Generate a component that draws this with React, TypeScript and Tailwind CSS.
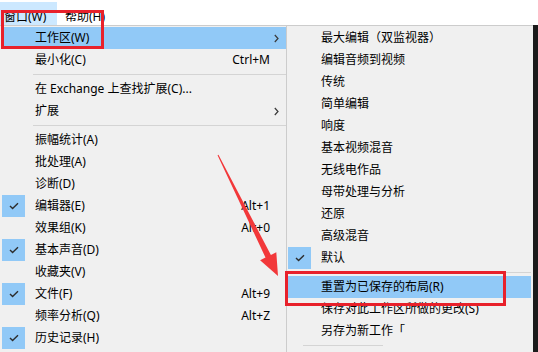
type Item =
  | { sep: true }
  | { sep?: false; label: string; shortcut?: string; checked?: boolean; sub?: boolean; active?: boolean };

const windowMenu: Item[] = [
  { label: '工作区(W)', sub: true, active: true },
  { label: '最小化(C)', shortcut: 'Ctrl+M' },
  { sep: true },
  { label: '在 Exchange 上查找扩展(C)...' },
  { label: '扩展', sub: true },
  { sep: true },
  { label: '振幅统计(A)' },
  { label: '批处理(A)' },
  { label: '诊断(D)' },
  { label: '编辑器(E)', shortcut: 'Alt+1', checked: true },
  { label: '效果组(K)', shortcut: 'Alt+0' },
  { label: '基本声音(D)', checked: true },
  { label: '收藏夹(V)' },
  { label: '文件(F)', shortcut: 'Alt+9', checked: true },
  { label: '频率分析(Q)', shortcut: 'Alt+Z' },
  { label: '历史记录(H)', checked: true },
];

const workspaceMenu: Item[] = [
  { label: '最大编辑（双监视器）' },
  { label: '编辑音频到视频' },
  { label: '传统' },
  { label: '简单编辑' },
  { label: '响度' },
  { label: '基本视频混音' },
  { label: '无线电作品' },
  { label: '母带处理与分析' },
  { label: '还原' },
  { label: '高级混音' },
  { label: '默认', checked: true },
  { sep: true },
  { label: '重置为已保存的布局(R)', active: true },
  { label: '保存对此工作区所做的更改(S)' },
  { label: '另存为新工作「' },
];

function Check() {
  return (
    <svg width="10" height="8" viewBox="0 0 10 8" fill="none">
      <polyline points="1,4 3.6,6.6 9,1.2" stroke="#2d2d2d" strokeWidth="1.4" />
    </svg>
  );
}

function Chevron() {
  return (
    <svg width="5" height="9" viewBox="0 0 5 9" fill="none">
      <polyline points="0.8,1 4,4.5 0.8,8" stroke="#3a3a3a" strokeWidth="1.2" />
    </svg>
  );
}

function MenuRows({ items, sepClass }: { items: Item[]; sepClass: string }) {
  return (
    <>
      {items.map((item, i) => {
        if (item.sep) {
          return (
            <div key={i} className="h-[7px] flex items-center">
              <div className={`h-px bg-[#d4d4d4] ${sepClass}`} />
            </div>
          );
        }
        return (
          <div
            key={i}
            className={`h-[22px] flex items-center ${item.active ? 'bg-[#91c9f7]' : ''}`}
          >
            <div
              className={`w-[23px] h-[22px] flex items-center justify-center ${
                item.checked ? 'bg-[#91c9f7]' : ''
              }`}
            >
              {item.checked && <Check />}
            </div>
            <span className="ml-[10px] flex-1 whitespace-nowrap">{item.label}</span>
            {item.shortcut && <span className="whitespace-nowrap">{item.shortcut}</span>}
            <div className="w-[16px] flex items-center pl-[4px]">{item.sub && <Chevron />}</div>
          </div>
        );
      })}
    </>
  );
}

export default function App() {
  return (
    <div className="relative w-[538px] h-[352px] overflow-hidden bg-white text-[12px] text-black font-['Noto_Sans','Noto_Sans_CJK_SC',sans-serif]">
      {/* menu bar */}
      <div className="h-[25px] flex items-end">
        <div className="h-[23px] w-[57px] bg-[#cce8ff] flex items-center pl-[4px] pt-[6px]">窗口(W)</div>
        <div className="h-[23px] flex items-center pl-[8px] pt-[6px]">帮助(H)</div>
      </div>

      <div className="flex">
        {/* window menu */}
        <div className="w-[286px] h-[327px] bg-[#f0f0f0] border-t border-[#cccccc] pt-px">
          <div className="ml-[2px]">
            <MenuRows items={windowMenu} sepClass="ml-[31px] w-[253px]" />
          </div>
        </div>

        {/* workspace submenu */}
        <div className="w-[247px] h-[327px] bg-[#f0f0f0] border-t border-l border-[#cccccc] pt-px pl-px pr-[2px]">
          <MenuRows items={workspaceMenu} sepClass="ml-[15px] w-[229px]" />
          <div className="h-[7px] flex items-center">
            <div className="ml-[15px] w-[80px] h-px bg-[#d4d4d4]" />
          </div>
        </div>

        <div className="flex-1 h-[327px] bg-[#1b1b1b]" />
      </div>

      {/* annotations */}
      <div className="absolute left-[1px] top-[10px] w-[103px] h-[39px] border-[3px] border-[#e8212b]" />
      <div className="absolute left-[285px] top-[271px] w-[221px] h-[35px] border-[3px] border-[#e8212b]" />
      <svg className="absolute left-0 top-0" width="538" height="352">
        <polygon
          points="218.45,154.78 270.9,255 276.3,252.3 278,276 260.1,260.3 265.5,257.6 217.55,155.22"
          fill="#f2383a"
        />
      </svg>
    </div>
  );
}
